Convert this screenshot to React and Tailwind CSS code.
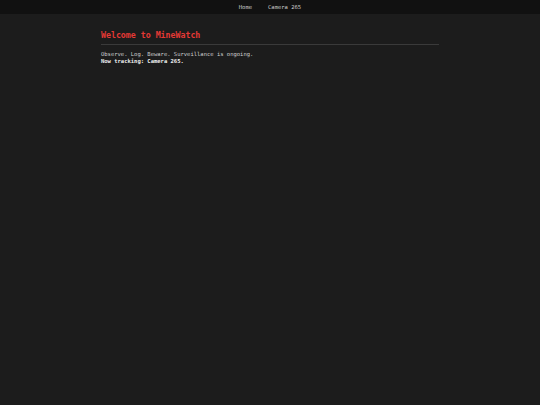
export default function App() {
  return (
    <div className="min-h-[405px] bg-[#1c1c1c] font-['DejaVu_Sans_Mono',monospace]">
      <nav className="h-[14px] bg-[#111111] flex items-center justify-center gap-[16px] text-[5.5px] text-[#cccccc]">
        <span>Home</span>
        <span>Camera 265</span>
      </nav>
      <main className="w-[338px] mx-auto pt-[15px]">
        <h1 className="text-[8.25px] leading-[12px] font-bold text-[#e53935] pb-[3px] border-b border-[#3a3a3a]">Welcome to MineWatch</h1>
        <div className="mt-[6px] text-[5.5px] leading-[7px] text-[#cfcfcf]">
          <p>Observe. Log. Beware. Surveillance is ongoing.</p>
          <p className="font-bold text-[#f0f0f0]">Now tracking: Camera 265.</p>
        </div>
      </main>
    </div>
  );
}
